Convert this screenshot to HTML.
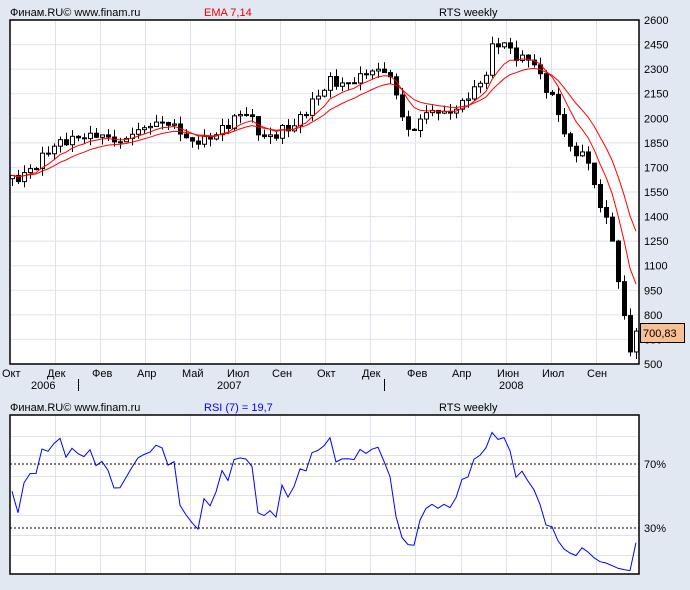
<!DOCTYPE html>
<html><head><meta charset="utf-8">
<style>
html,body{margin:0;padding:0;background:#e2e8f2;width:690px;height:590px;overflow:hidden}
svg{display:block;font-family:"Liberation Sans",sans-serif;font-size:11px}
</style></head><body>
<svg id="s" width="690" height="590" xmlns="http://www.w3.org/2000/svg">
<rect x="10" y="20" width="629" height="344" fill="#fff"/>
<rect x="10" y="415" width="629" height="159" fill="#fff"/>
<g id="grid" stroke="#dde3ee" stroke-width="1"></g>
<g id="plot"></g>
<rect x="10" y="20" width="629" height="344" fill="none" stroke="#000" stroke-width="1.5"/>
<rect x="10" y="415" width="629" height="159" fill="none" stroke="#000" stroke-width="1.5"/>
<line x1="10" y1="464" x2="639" y2="464" stroke="#000" stroke-dasharray="2,2"/>
<line x1="10" y1="528" x2="639" y2="528" stroke="#000" stroke-dasharray="2,2"/>
<text x="10" y="16">Финам.RU©  www.finam.ru</text>
<text x="204" y="16" fill="#e00">EMA 7,14</text>
<text x="439" y="16">RTS weekly</text>
<text x="10" y="411">Финам.RU©  www.finam.ru</text>
<text x="204" y="411" fill="#00f">RSI (7) = 19,7</text>
<text x="439" y="411">RTS weekly</text>
<text x="644" y="468">70%</text>
<text x="644" y="532">30%</text>
<g id="yl"></g>
<g font-size="11">
<text x="2" y="377">Окт</text><text x="47" y="377">Дек</text><text x="92" y="377">Фев</text><text x="137" y="377">Апр</text><text x="182" y="377">Май</text><text x="227" y="377">Июл</text><text x="272" y="377">Сен</text><text x="317" y="377">Окт</text><text x="362" y="377">Дек</text><text x="407" y="377">Фев</text><text x="452" y="377">Апр</text><text x="497" y="377">Июн</text><text x="542" y="377">Июл</text><text x="587" y="377">Сен</text>
<text x="31" y="389">2006</text><text x="217" y="389">2007</text><text x="499" y="389">2008</text>
</g>
<line x1="78.5" y1="379" x2="78.5" y2="391" stroke="#000"/>
<line x1="384.5" y1="379" x2="384.5" y2="391" stroke="#000"/>
<rect x="640.5" y="323.5" width="44" height="19" fill="#f9bf94" stroke="#000"/>
<text x="643" y="337">700,83</text>
</svg>
<script>
var NS="http://www.w3.org/2000/svg",g=document.getElementById('grid'),p=document.getElementById('plot'),yl=document.getElementById('yl');
function el(t,a,par){var e=document.createElementNS(NS,t);for(var k in a)e.setAttribute(k,a[k]);(par||p).appendChild(e);return e}
var vx=[55,100,145,190,235,280,325,370,415,461,506,551,596];
vx.forEach(function(x){el('line',{x1:x+.5,y1:20,x2:x+.5,y2:364},g);el('line',{x1:x+.5,y1:415,x2:x+.5,y2:574},g)});
function Y(pr){return 20+(2600-pr)/2100*344}
for(var v=500;v<=2600;v+=150){var y=Y(v);if(v>500&&v<2600)el('line',{x1:10,y1:y,x2:639,y2:y},g);var t=el('text',{x:644,y:y+4},yl);t.textContent=v}
[436,455,476,495,515,535,555].forEach(function(y){el('line',{x1:10,y1:y+.5,x2:639,y2:y+.5},g)});
var K=[[12,1620],[30,1680],[45,1780],[55,1840],[75,1880],[100,1900],[120,1850],[135,1920],[160,1980],[175,1950],[190,1850],[205,1870],[215,1900],[235,2000],[245,2050],[255,1950],[265,1870],[280,1920],[295,1960],[310,2080],[330,2230],[345,2200],[370,2290],[385,2290],[392,2230],[397,2120],[405,1950],[412,1900],[420,2000],[430,2050],[445,2030],[455,2050],[470,2150],[485,2250],[492,2430],[500,2470],[510,2420],[520,2350],[530,2380],[540,2250],[550,2150],[560,2000],[570,1800],[580,1800],[590,1700],[600,1450],[606,1400],[612,1250],[618,1000],[624,800],[630,570],[636,700]];
function interp(x){for(var i=0;i<K.length-1;i++)if(x<=K[i+1][0]){var a=K[i],b=K[i+1];return a[1]+(b[1]-a[1])*(x-a[0])/(b[0]-a[0])}return K[K.length-1][1]}
var xs=[],cl=[];for(var x=12;x<=636.1;x+=6){xs.push(x);var n=Math.sin(x*1.7)*18+Math.sin(x*0.63)*14;if(x>590)n*=0.2;cl.push(interp(x)+n)}
cl[cl.length-1]=700.83;
var o=cl[0]-20;
for(var i=0;i<xs.length;i++){var c=cl[i],op=i?cl[i-1]:o,hi=Math.max(c,op)+Math.abs(Math.sin(i*2.3))*45,lo=Math.min(c,op)-Math.abs(Math.cos(i*1.9))*45;var X=Math.round(xs[i]);
el('line',{x1:X+.5,y1:Y(hi),x2:X+.5,y2:Y(lo),stroke:'#000'});
var up=c>=op,y1=Y(Math.max(c,op)),y2=Y(Math.min(c,op));if(y2-y1<1)y2=y1+1;
el('rect',{x:X-1.5,y:y1,width:4,height:y2-y1,fill:up?'#fff':'#000',stroke:'#000','stroke-width':1})}
function ema(n){var k=2/(n+1),e=cl[0],r=[];cl.forEach(function(c){e=c*k+e*(1-k);r.push(e)});return r}
[7,14].forEach(function(n){var e=ema(n),d='';e.forEach(function(v,i){d+=(i?'L':'M')+xs[i].toFixed(1)+' '+Y(v).toFixed(1)});el('path',{d:d,fill:'none',stroke:'#f00','stroke-width':1})});
var ag=10,al=10,d='';for(var i=0;i<cl.length;i++){var ch=i?cl[i]-cl[i-1]:5;ag=(ag*6+Math.max(ch,0))/7;al=(al*6+Math.max(-ch,0))/7;var r=100-100/(1+ag/al);if(i==cl.length-1)r=19.7;var y=415+(100-r)/100*159;d+=(i?'L':'M')+xs[i].toFixed(1)+' '+Math.min(572,Math.max(417,y)).toFixed(1)}
el('path',{d:d,fill:'none',stroke:'#00f','stroke-width':1});
</script>
</body></html>
